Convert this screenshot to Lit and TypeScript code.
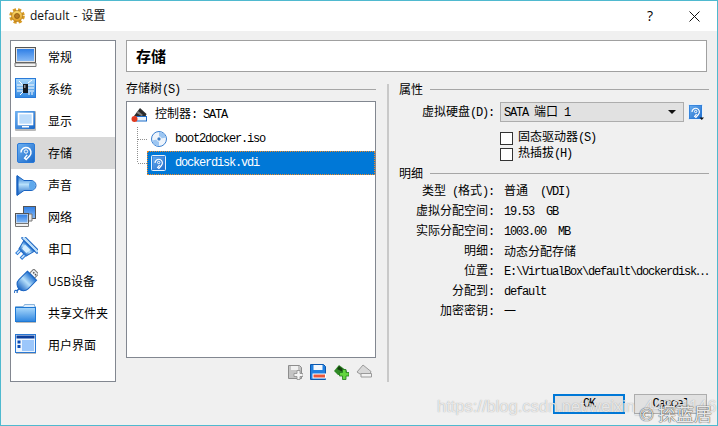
import { LitElement, html, css, svg } from "lit";
import { customElement } from "lit/decorators.js";

const defs = svg`
  <defs>
    <linearGradient id="blue" x1="0" y1="0" x2="0" y2="1"><stop offset="0" stop-color="#2f7fe6"/><stop offset="1" stop-color="#86b9f5"/></linearGradient>
    <linearGradient id="sky" x1="0" y1="0" x2="0" y2="1"><stop offset="0" stop-color="#a9d8fb"/><stop offset="1" stop-color="#2f86e0"/></linearGradient>
    <linearGradient id="deep" x1="0" y1="0" x2="1" y2="1"><stop offset="0" stop-color="#6fb2f2"/><stop offset="1" stop-color="#1a68c8"/></linearGradient>
    <linearGradient id="horn" x1="0" y1="0" x2="0" y2="1"><stop offset="0" stop-color="#1d6fd0"/><stop offset=".45" stop-color="#b7e0fb"/><stop offset="1" stop-color="#1a64c2"/></linearGradient>
    <linearGradient id="gold" x1="0" y1="0" x2="0" y2="1"><stop offset="0" stop-color="#fbdc70"/><stop offset="1" stop-color="#e09a20"/></linearGradient>
  </defs>`;

const navIcons = [
  svg`<rect x="1.500" y="2.500" width="20" height="15" fill="#e4e4e4" stroke="#555"/><rect x="3" y="4" width="17" height="12" fill="url(#blue)"/><path d="M1 18h21v3.500H1z" fill="#f2f2f2" stroke="#777"/>`,
  svg`<rect x="1.500" y="1.500" width="20" height="19" fill="url(#sky)" stroke="#2a7ad8"/><path d="M3 8h6M3 11h6M3 14h6M14 8h6M14 11h6M14 14h6M6 18l3-3M14 6l4-3M5 4l3 3M15 18v-3M18 18v-3" stroke="#fff" fill="none"/><rect x="9" y="7" width="5" height="9" fill="#141a22"/><rect x="10" y="8" width="1.500" height="3" fill="#8a8f98"/>`,
  svg`<rect x="1" y="2" width="21" height="20" rx="1" fill="#b9b9b9"/><rect x="1" y="2" width="20" height="18" rx="1" fill="url(#deep)"/><rect x="4.500" y="4.500" width="14" height="11" fill="#bcdcfb" stroke="#fff" stroke-width="1.600"/><path d="M8 17h7v1.500H8z" fill="#fff"/>`,
  svg`<rect x="3.500" y="2.500" width="17" height="19" rx="1.500" fill="url(#deep)" stroke="#2a7ad8"/><path d="M7 11.500a5 5 0 1 1 8.600 3.400l-3.400 3.600-1.600-1.400 2.600-3.200" fill="none" stroke="#fff" stroke-width="1.500"/><circle cx="12" cy="10.500" r="1.700" fill="none" stroke="#fff"/>`,
  svg`<path d="M3 2.500l7 5h7a5 5 0 0 1 5 5 5 5 0 0 1-5 5h-7l-7 5z" fill="url(#horn)" stroke="#1a64c2"/><path d="M3.500 3v19" stroke="#1a64c2" stroke-width="2"/><ellipse cx="18" cy="12.500" rx="3" ry="4.500" fill="#5ea8ec"/>`,
  svg`<rect x="9.500" y="1.500" width="12" height="12" fill="url(#blue)" stroke="#555"/><rect x="1.500" y="8.500" width="13" height="10" fill="#eee" stroke="#555"/><rect x="2.500" y="9.500" width="11" height="8" fill="url(#blue)"/><path d="M1.500 18.500h13v3h-13z" fill="#f2f2f2" stroke="#777"/><path d="M15 9h3v7h-3" fill="#e8e8e8" stroke="#777"/>`,
  svg`<g transform="rotate(45 12 12)"><rect x="1" y="4" width="22" height="3.500" rx="1" fill="#bfe0fa" stroke="#1a64c2"/><path d="M4.500 7.500h15l-2.500 9.500H7z" fill="url(#horn)" stroke="#1a64c2"/><path d="M8 9.500h8l-1 5H9z" fill="#d5eeff"/><rect x="7.500" y="17" width="2.500" height="5" fill="#cfe6fb" stroke="#2a7ad8"/><rect x="14" y="17" width="2.500" height="5" fill="#cfe6fb" stroke="#2a7ad8"/></g>`,
  svg`<g transform="rotate(45 12 12)"><rect x="9" y="-2" width="7" height="6" fill="#eef2f6" stroke="#777"/><path d="M11 0h1.500v1.500H11zM13.500 0H15v1.500h-1.500z" fill="#555"/><path d="M6 4h13v12a6.500 6.500 0 0 1-13 0z" fill="url(#horn)" stroke="#1a64c2"/><path d="M12.500 22v4" stroke="#1a64c2" stroke-width="1.500"/><circle cx="12.500" cy="27" r="1.500" fill="#fff" stroke="#1a64c2"/></g>`,
  svg`<path d="M1.500 5.500h8l1-2h10v2h1v15h-20z" fill="#dfeefc" stroke="#8ab4dc"/><rect x="1.500" y="6.500" width="20" height="14" fill="url(#sky)" stroke="#1e78d4"/><path d="M2 21.500h20" stroke="#bbb"/>`,
  svg`<rect x="1.500" y="1.500" width="20" height="18" fill="#eef5fd" stroke="#2a78d2"/><rect x="2.500" y="2.500" width="18" height="3" fill="#0a3d9c"/><rect x="8" y="7" width="12" height="11" fill="#9cc7fb"/><rect x="3.500" y="7.500" width="3" height="3" fill="#0a4cb4"/><rect x="3.500" y="12" width="3" height="3" fill="#0a4cb4"/><path d="M2 20.500h20" stroke="#bbb"/>`,
];

const navItems = ["常规", "系统", "显示", "存储", "声音", "网络", "串口", "USB设备", "共享文件夹", "用户界面"];

const diskSmall = svg`<rect x=".5" y=".5" width="14" height="15" rx="1" fill="url(#deep)" stroke="#e8f2fc"/><rect x="1.500" y="1.500" width="12" height="13" fill="none" stroke="#2a7ad8" stroke-opacity=".7"/><path d="M4 8a3.700 3.700 0 1 1 6.400 2.500l-2.500 3-1.300-1 2-2.500" fill="none" stroke="#fff" stroke-width="1.200"/><circle cx="7.700" cy="7.500" r="1.200" fill="none" stroke="#fff"/>`;

const icon = (body: unknown, size: number, cls = "") =>
  html`<svg class=${cls} width=${size} height=${size} viewBox="0 0 ${size} ${size}">${body}</svg>`;

const elbow = (tall: boolean) =>
  html`<svg width="10" height="24" viewBox="0 0 10 24"><path d=${tall ? "M.5 0v24" : "M.5 0v12"} stroke="#8f8f8f" stroke-dasharray="1 1" fill="none"/><path d="M1 12.500h9" stroke="#8f8f8f" stroke-dasharray="1 1" fill="none"/></svg>`;

/* Mixed text: ASCII runs take the narrow mono face, the rest stays CJK. */
const mix = (s: string) =>
  s.split(/([\x20-\x7e]+)/).map((p, i) => (i % 2 ? html`<span class="lat">${p}</span>` : p));

const details: [string, string][] = [
  ["类型 (格式):", "普通  (VDI)"],
  ["虚拟分配空间:", "19.53  GB"],
  ["实际分配空间:", "1003.00  MB"],
  ["明细:", "动态分配存储"],
  ["位置:", "E:\\VirtualBox\\default\\dockerdisk⋯"],
  ["分配到:", "default"],
  ["加密密钥:", "一"],
];

@customElement("app-root")
export class AppRoot extends LitElement {
  static styles = css`
    :host { display: block; width: 718px; height: 426px; overflow: hidden; }
    * { box-sizing: border-box; }
    svg { display: block; flex: none; }
    .lat { font-family: "Liberation Mono", monospace; font-size: 12px; letter-spacing: -1.2px; white-space: pre; }
    .win {
      position: relative; width: 718px; height: 426px; background: #f0f0f0; color: #000;
      border: 1px solid #4fb9cf; display: flex; flex-direction: column;
      font: 12px/16px "Noto Sans CJK SC", sans-serif;
    }
    .defs { position: absolute; width: 0; height: 0; }
    .title { height: 30px; background: #fff; display: flex; align-items: center; flex: none; }
    .gear { margin: 0 5px 0 8px; }
    .title-text { font: 12px/16px "Open Sans", "Noto Sans CJK SC", sans-serif; color: #111; flex: 1; word-spacing: 1px; }
    .help { font: 14px/16px "Open Sans", sans-serif; width: 12px; text-align: center; margin-right: 33px; }
    .close { margin-right: 17px; }
    .body { display: flex; gap: 10px; padding: 9px 0 0 9px; }
    .nav { width: 106px; height: 342px; background: #fff; border: 1px solid #828790; flex: none; }
    .nav-item { height: 32px; display: flex; align-items: center; gap: 10px; padding-left: 3px; font-family: "Open Sans", "Noto Sans CJK SC", sans-serif; }
    .nav-item span { padding-top: 2px; }
    .nav-item.on { background: #d9d9d9; }
    .main { width: 582px; flex: none; }
    .head { height: 32px; width: 581px; background: #fff; border: 1px solid #a0a0a0; padding-left: 9px; font-size: 15px; font-weight: 700; line-height: 29px; }
    .panes { display: flex; margin-top: 10px; }
    .left { width: 250px; flex: none; }
    .sep { width: 2px; height: 298px; margin: 2px 10px 0 11px; background: #c9c9c9; flex: none; }
    .right { flex: 1; }
    .group { display: flex; align-items: center; gap: 7px; height: 14px; }
    .group::after { content: ""; flex: 1; height: 1px; background: #a6a6a6; }
    .tree { height: 257px; margin-top: 5px; background: #fff; border: 1px solid #828790; padding-top: 1px; }
    .row { height: 24px; display: flex; align-items: center; }
    .row span { padding-bottom: 2px; }
    .row.root { padding-left: 4px; gap: 8px; }
    .row.leaf { padding-left: 10px; }
    .row .lat { padding: 0; }
    .cell { flex: 1; height: 24px; display: flex; align-items: center; gap: 8px; padding-left: 4px; }
    .cell.sel { background: #0078d7; color: #fff; border: 1px dotted #f08a24; padding-left: 3px; }
    .tools { display: flex; justify-content: flex-end; gap: 7px; padding: 6px 4px 0 0; }
    .prop { display: flex; align-items: center; margin-top: 6px; height: 20px; }
    .lab { width: 95px; text-align: right; margin-right: 6px; flex: none; white-space: pre; }
    .combo { width: 184px; height: 20px; background: #e1e1e1; border: 1px solid #adadad; display: flex; align-items: center; padding: 0 5px 0 3px; }
    .combo-text { flex: 1; }
    .arrow { width: 0; height: 0; border: 4px solid transparent; border-top: 4px solid #111; border-bottom: 0; margin-right: 2px; }
    .pick { margin-left: 4px; }
    .checks { padding: 8px 0 4px 101px; }
    .check { display: flex; align-items: center; gap: 5px; height: 16px; }
    .check-text { padding-bottom: 2px; }
    .box { width: 13px; height: 13px; background: #fff; border: 1px solid #333; flex: none; }
    .grid { margin-top: 1px; }
    .d-row { display: flex; align-items: center; height: 20px; }
    .d-row .lab { margin-right: 10px; }
    .d-val { white-space: pre; }
    .foot { position: absolute; right: 10px; top: 393px; display: flex; gap: 9px; }
    .btn { width: 73px; height: 20px; background: #e1e1e1; border: 1px solid #adadad; display: flex; align-items: center; justify-content: center; }
    .btn.def { width: 72px; border: 2px solid #0078d7; }
    .wm { position: absolute; left: 436px; top: 394px; font: 16.5px/22px "Liberation Sans", sans-serif; color: rgba(255,255,255,.75); text-shadow: 0 0 1px rgba(120,120,120,.75); white-space: nowrap; }
    .wm2 { position: absolute; right: 5px; top: 400px; font: 18px/24px "Noto Sans CJK SC", sans-serif; color: rgba(255,255,255,.9); text-shadow: 0 0 1px #444, 0 0 1px #444; white-space: nowrap; }
  `;

  render() {
    return html`<div class="win">
      <svg class="defs">${defs}</svg>
      <div class="title">
        ${icon(svg`<circle cx="8" cy="8" r="6.300" fill="none" stroke="#d89a24" stroke-width="3" stroke-dasharray="3 2"/><circle cx="8" cy="8" r="5.500" fill="url(#gold)" stroke="#a06c14" stroke-width=".6"/><circle cx="8" cy="8" r="2.500" fill="#b87a20" stroke="#8a5a10" stroke-width=".8"/>`, 16, "gear")}
        <span class="title-text">default - 设置</span>
        <span class="help">?</span>
        ${icon(svg`<path d="M.5 .5l10 10M10.500 .5l-10 10" stroke="#111" fill="none"/>`, 11, "close")}
      </div>
      <div class="body">
        <div class="nav">
          ${navItems.map((n, i) => html`<div class="nav-item ${i === 3 ? "on" : ""}">${icon(navIcons[i], 24)}<span>${n}</span></div>`)}
        </div>
        <div class="main">
          <div class="head">存储</div>
          <div class="panes">
            <div class="left">
              <div class="group"><span>${mix("存储树(S)")}</span></div>
              <div class="tree">
                <div class="row root">
                  ${icon(svg`<path d="M3 9l6-8 6.500 6-1 2.500H5z" fill="#2b2b2b"/><path d="M7 4l5 4-1.500 1L5.500 6z" fill="#7d7d7d"/><rect x="5.500" y="9.500" width="10" height="4.500" fill="#eaf3fc" stroke="#1c6cc8"/><circle cx="3.500" cy="12" r="3" fill="#e03a20"/>`, 16)}
                  <span>${mix("控制器: SATA")}</span>
                </div>
                <div class="row leaf">
                  ${elbow(true)}
                  <div class="cell">
                    ${icon(svg`<circle cx="8" cy="8" r="7.500" fill="#eef4fb" stroke="#3a7fd0"/><path d="M8 1a7 7 0 0 1 6.800 5.500L8 8zM8 15a7 7 0 0 1-6.800-5.500L8 8z" fill="#9cc6f2"/><circle cx="8" cy="8" r="2.200" fill="#3f7fc8" stroke="#fff"/>`, 16)}
                    <span>${mix("boot2docker.iso")}</span>
                  </div>
                </div>
                <div class="row leaf">
                  ${elbow(false)}
                  <div class="cell sel">
                    ${icon(diskSmall, 16)}
                    <span>${mix("dockerdisk.vdi")}</span>
                  </div>
                </div>
              </div>
              <div class="tools">
                ${icon(svg`<path d="M1.500 1.500h11l2 2v11h-13z" fill="#c4c4c4" stroke="#8d8d8d"/><rect x="4" y="2" width="7" height="4" fill="#f1f1f1"/><path d="M7 9.500h3V6.500h3v3h3V12.500h-3v3h-3v-3H7z" fill="#f4f4f4" stroke="#8d8d8d" stroke-width=".8"/>`, 16)}
                ${icon(svg`<path d="M.5 .5h13l2 2v13H.5z" fill="#1f7fe0" stroke="#0c58ae"/><rect x="3.500" y="1" width="9" height="5" fill="#f3f8fd"/><rect x="3" y="10" width="12.500" height="4" fill="#e8563c" stroke="#fff"/>`, 16)}
                ${icon(svg`<path d="M1 7l5-6 8 6-2 4H5z" fill="#2f8a26"/><path d="M4 5l2-3 5 4-2 1.500z" fill="#16400f"/><path d="M6.500 8.500h3V5.500h3.500v3h3V12h-3v3.500H9.500V12h-3z" fill="#63d63f" stroke="#1f7a1a" stroke-width=".8"/>`, 16)}
                ${icon(svg`<path d="M1 8l6-7 8 6.500-1 2.500H4z" fill="#d8d8d8" stroke="#9a9a9a"/><path d="M5 9.500h10.500v3.500H5z" fill="#f2f2f2" stroke="#9a9a9a"/>`, 16)}
              </div>
            </div>
            <div class="sep"></div>
            <div class="right">
              <div class="group">属性</div>
              <div class="prop">
                <span class="lab">${mix("虚拟硬盘(D):")}</span>
                <div class="combo"><span class="combo-text">${mix("SATA 端口 1")}</span><span class="arrow"></span></div>
                ${icon(svg`${diskSmall}<path d="M11.500 13.500h4.500l-2.250 2.500z" fill="#111"/>`, 16, "pick")}
              </div>
              <div class="checks">
                <div class="check"><span class="box"></span><span class="check-text">${mix("固态驱动器(S)")}</span></div>
                <div class="check"><span class="box"></span><span class="check-text">${mix("热插拔(H)")}</span></div>
              </div>
              <div class="group">明细</div>
              <div class="grid">
                ${details.map(([k, v]) => html`<div class="d-row"><span class="lab">${mix(k)}</span><span class="d-val">${mix(v)}</span></div>`)}
              </div>
            </div>
          </div>
        </div>
      </div>
      <div class="foot">
        <div class="btn def">${mix("OK")}</div>
        <div class="btn">${mix("Cancel")}</div>
      </div>
      <div class="wm">https://blog.csdn.net/weixin_44821146</div>
      <div class="wm2">© 探蓝居</div>
    </div>`;
  }
}
